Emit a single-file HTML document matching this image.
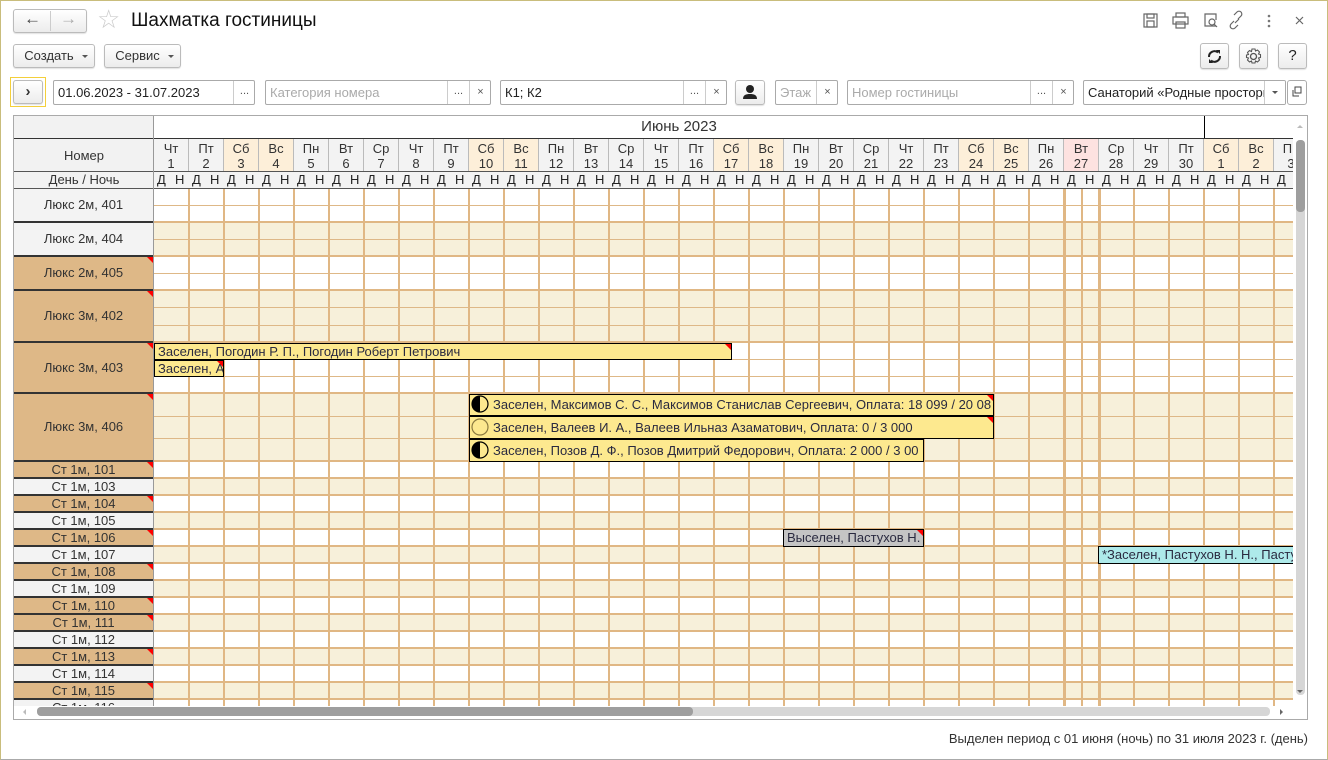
<!DOCTYPE html>
<html><head><meta charset="utf-8">
<style>
*{box-sizing:border-box;margin:0;padding:0}
body{width:1328px;height:760px;overflow:hidden;background:#fff;font-family:"Liberation Sans",Arial,sans-serif;font-size:13px;color:#333;position:relative}
.a{position:absolute}
.frame{left:0;top:0;width:1328px;height:760px;border:1px solid #c9bd7c;border-bottom-color:#aaa}
.btn{position:absolute;border:1px solid #bbb;border-radius:3px;background:linear-gradient(#fff,#ececec);box-shadow:0 1px 1px rgba(0,0,0,.12);text-align:center;color:#333}
.inp{position:absolute;border:1px solid #aaa;border-radius:2px;background:#fff;height:25px;line-height:23px;padding-left:4px;white-space:nowrap;overflow:hidden}
.sub{position:absolute;top:0;height:23px;border-left:1px solid #ccc;text-align:center;width:22px;color:#555;font-size:11px}
.ph{color:#aaa}
.hd{position:absolute;text-align:center;line-height:15px;border-right:1px solid #bbb}
.bk{position:absolute;border:1px solid #000;white-space:nowrap;overflow:hidden;padding-left:3px;color:#2a2a40}
.rc{position:absolute;right:0;top:0;width:0;height:0;border-top:6px solid #f00;border-left:6px solid transparent}
</style></head><body>
<div class="a frame"></div>
<div class="btn" style="left:13px;top:9px;width:74px;height:24px"></div>
<div class="a" style="left:50px;top:11px;width:1px;height:20px;background:#ccc"></div>
<div class="a" style="left:24px;top:9px;font-size:17px;font-weight:bold;color:#444">&#8592;</div>
<div class="a" style="left:60px;top:9px;font-size:17px;font-weight:bold;color:#aaa">&#8594;</div>
<div class="a" style="left:97px;top:4px;font-size:26px;color:#ccc">&#9734;</div>
<div class="a" style="left:131px;top:10px;font-size:19px;color:#111">Шахматка гостиницы</div>
<svg class="a" style="left:1140px;top:10px" width="180" height="22" viewBox="0 0 180 22">
<g fill="none" stroke="#666" stroke-width="1.2">
<rect x="4" y="4" width="13" height="13"/><rect x="7" y="4" width="7" height="4"/><rect x="7" y="11" width="7" height="6"/>
<rect x="36" y="3" width="9" height="4"/><rect x="33" y="7" width="15" height="7"/><rect x="36" y="12" width="9" height="6"/>
<path d="M76 16H65V4h11v6"/><circle cx="72" cy="12" r="3"/><path d="M74 14l3 3"/>
<path d="M94 11l-3 3a2.5 2.5 0 0 0 4 4l3-3M98 9l3-3a2.5 2.5 0 0 0-4-4l-3 3M95 13l4-4"/>
</g>
<g fill="#777"><circle cx="129" cy="6" r="1.3"/><circle cx="129" cy="11" r="1.3"/><circle cx="129" cy="16" r="1.3"/></g>
<path d="M156 7l7 7M163 7l-7 7" stroke="#666" stroke-width="1.2"/>
</svg>
<div class="btn" style="left:13px;top:44px;width:82px;height:24px;line-height:22px;padding-right:10px">Создать</div>
<div class="a" style="left:82px;top:55px;border-left:3px solid transparent;border-right:3px solid transparent;border-top:3px solid #555"></div>
<div class="btn" style="left:104px;top:44px;width:77px;height:24px;line-height:22px;padding-right:10px">Сервис</div>
<div class="a" style="left:168px;top:55px;border-left:3px solid transparent;border-right:3px solid transparent;border-top:3px solid #555"></div>
<div class="btn" style="left:1200px;top:43px;width:29px;height:26px"></div>
<svg class="a" style="left:1205px;top:47px" width="19" height="19" viewBox="0 0 19 19"><path d="M4 10a5.5 5.5 0 0 1 9-4.5M15 9a5.5 5.5 0 0 1-9 4.5" fill="none" stroke="#222" stroke-width="2"/><path d="M11 3l4 0 0 4z M8 16l-4 0 0-4z" fill="#222"/></svg>
<div class="btn" style="left:1239px;top:43px;width:29px;height:26px"></div>
<svg class="a" style="left:1244px;top:47px" width="19" height="19" viewBox="0 0 19 19"><circle cx="9.5" cy="9.5" r="3" fill="none" stroke="#555" stroke-width="1.3"/><path d="M8 2h3l.5 2 2-1 2 2-1 2 2 .5v3l-2 .5 1 2-2 2-2-1-.5 2H8l-.5-2-2 1-2-2 1-2-2-.5V8l2-.5-1-2 2-2 2 1z" fill="none" stroke="#555" stroke-width="1.1"/></svg>
<div class="btn" style="left:1278px;top:43px;width:29px;height:26px;line-height:24px;font-size:15px;color:#222">?</div>
<div class="a" style="left:10px;top:77px;width:36px;height:30px;border:1px solid #f3cf3b"></div>
<div class="btn" style="left:13px;top:80px;width:30px;height:24px;line-height:21px;font-size:15px;font-weight:bold;color:#333">&#8250;</div>
<div class="inp" style="left:53px;top:80px;width:202px;color:#222">01.06.2023 - 31.07.2023<span class="sub" style="left:179px;line-height:20px">...</span></div>
<div class="inp ph" style="left:265px;top:80px;width:226px">Категория номера<span class="sub" style="left:181px;line-height:20px">...</span><span class="sub" style="left:203px">×</span></div>
<div class="inp" style="left:500px;top:80px;width:227px;color:#222">К1; К2<span class="sub" style="left:182px;line-height:20px">...</span><span class="sub" style="left:204px">×</span></div>
<div class="btn" style="left:735px;top:80px;width:30px;height:25px"></div>
<svg class="a" style="left:741px;top:83px" width="18" height="18" viewBox="0 0 18 18"><circle cx="9" cy="6" r="4" fill="#222"/><path d="M2 16c0-4 3-5 7-5s7 1 7 5z" fill="#222"/></svg>
<div class="inp ph" style="left:775px;top:80px;width:63px">Этаж<span class="sub" style="left:40px">×</span></div>
<div class="inp ph" style="left:847px;top:80px;width:227px">Номер гостиницы<span class="sub" style="left:182px;line-height:20px">...</span><span class="sub" style="left:204px">×</span></div>
<div class="inp" style="left:1083px;top:80px;width:203px;color:#222">Санаторий «Родные просторы<span class="sub" style="left:180px;width:22px;background:#fff"></span></div>
<div class="a" style="left:1272px;top:91px;border-left:3px solid transparent;border-right:3px solid transparent;border-top:3px solid #555"></div>
<div class="btn" style="left:1287px;top:80px;width:20px;height:25px;box-shadow:none;background:#fff;border-color:#aaa"></div>
<svg class="a" style="left:1291px;top:86px" width="12" height="12"><rect x="4" y="1" width="6" height="6" fill="none" stroke="#444"/><path d="M2 4v6h6" fill="none" stroke="#444"/></svg>
<div class="a" style="left:13px;top:115px;width:1295px;height:605px;border:1px solid #aaa"></div>
<div class="a" style="left:14px;top:116px;width:140px;height:73px;background:#f2f2f2"></div>
<div class="a" id="g" style="left:14px;top:116px;width:1279px;height:590px;overflow:hidden"></div>
<div class="a" style="left:1295px;top:116px;width:12px;height:590px;background:#fff"></div>
<div class="a" style="left:1296px;top:140px;width:9px;height:555px;background:#d6d6d6;border-radius:4px"></div>
<div class="a" style="left:1296px;top:140px;width:9px;height:72px;background:#9e9e9e;border-radius:4px"></div>
<div class="a" style="left:1297px;top:125px;border-left:3px solid transparent;border-right:3px solid transparent;border-bottom:3px solid #bbb"></div>
<div class="a" style="left:1297px;top:690px;border-left:3px solid transparent;border-right:3px solid transparent;border-top:3px solid #666"></div>
<div class="a" style="left:14px;top:706px;width:1293px;height:13px;background:#fff"></div>
<div class="a" style="left:37px;top:707px;width:1233px;height:9px;background:#d6d6d6;border-radius:4px"></div>
<div class="a" style="left:37px;top:707px;width:656px;height:9px;background:#9e9e9e;border-radius:4px"></div>
<div class="a" style="left:23px;top:709px;border-top:3px solid transparent;border-bottom:3px solid transparent;border-right:3px solid #bbb"></div>
<div class="a" style="left:1280px;top:709px;border-top:3px solid transparent;border-bottom:3px solid transparent;border-left:3px solid #666"></div>
<div class="a" style="right:20px;top:731px;font-size:13px;color:#333">Выделен период с 01 июня (ночь) по 31 июля 2023 г. (день)</div>
<script>
var g=document.getElementById('g'),h='';
var X0=140,W=35,TAN='#e0b784',LT='#deb887';
function d(s){h+=s}
d('<div class="a" style="left:'+X0+'px;top:0;width:1050px;height:22px;text-align:center;line-height:22px;font-size:15px;color:#333">Июнь 2023</div>');
d('<div class="a" style="left:'+(X0+1050)+'px;top:0;width:1px;height:23px;background:#000"></div>');
d('<div class="a" style="left:0;top:22px;width:1279px;height:1px;background:#333"></div>');
var dn=['Пн','Вт','Ср','Чт','Пт','Сб','Вс'];
for(var i=0;i<33;i++){
 var day=i<30?i+1:i-29, wd=(3+i)%7, x=X0+i*W;
 var bg=(wd>=5)?'#fdefd9':(i==26?'#fde2e0':'#f3f3f3');
 d('<div class="hd" style="left:'+x+'px;top:23px;width:'+W+'px;height:33px;background:'+bg+';padding-top:2px">'+dn[wd]+'<br>'+day+'</div>');
 d('<div class="a" style="left:'+x+'px;top:56px;width:'+W+'px;height:16px;background:#f3f3f3;line-height:16px;color:#222"><span style="position:absolute;left:3px">Д</span><span style="position:absolute;left:21px">Н</span></div>');
}
d('<div class="a" style="left:0;top:23px;width:140px;height:33px;line-height:33px;text-align:center;background:#f2f2f2">Номер</div>');
d('<div class="a" style="left:0;top:56px;width:140px;height:16px;line-height:16px;text-align:center;background:#f2f2f2">День / Ночь</div>');
d('<div class="a" style="left:0;top:55px;width:1279px;height:1px;background:#555"></div>');
d('<div class="a" style="left:0;top:72px;width:1279px;height:1px;background:#555"></div>');
var rows=[['Люкс 2м, 401',34,2,0],['Люкс 2м, 404',34,2,0],['Люкс 2м, 405',34,2,1],['Люкс 3м, 402',52,3,1],['Люкс 3м, 403',51,3,1],['Люкс 3м, 406',68,3,1]];
var st=[101,103,104,105,106,107,108,109,110,111,112,113,114,115,116];
var stt=[1,0,1,0,1,0,1,0,1,1,0,1,0,1,0];
for(var k=0;k<st.length;k++)rows.push(['Ст 1м, '+st[k],17,1,stt[k]]);
var y=73;
for(var r=0;r<rows.length;r++){
 var R=rows[r],bg=r%2?'#f7f0da':'#fff',sh=R[1]/R[2];
 d('<div class="a" style="left:140px;top:'+y+'px;width:1139px;height:'+R[1]+'px;background:'+bg+'"></div>');
 for(var s=1;s<R[2];s++)d('<div class="a" style="left:140px;top:'+Math.round(y+s*sh-1)+'px;width:1139px;height:1px;background:'+LT+'"></div>');
 d('<div class="a" style="left:140px;top:'+(y+R[1]-2)+'px;width:1139px;height:3px;background:'+TAN+'"></div>');
 var lb=R[3]?'#deb887':'#f3f3f3';
 d('<div class="a" style="left:0;top:'+y+'px;width:139px;height:'+R[1]+'px;background:'+lb+';text-align:center;line-height:'+(R[1]-2)+'px;color:#333">'+R[0]+(R[3]?'<div class="rc"></div>':'')+'</div>');
 d('<div class="a" style="left:0;top:'+(y+R[1]-2)+'px;width:139px;height:3px;background:#333"></div>');
 y+=R[1];
}
for(var i=1;i<33;i++){var x=X0+i*W-1;d('<div class="a" style="left:'+x+'px;top:73px;width:2px;height:520px;background:'+TAN+'"></div>');}
d('<div class="a" style="left:'+(X0+26*W-1)+'px;top:73px;width:3px;height:520px;background:'+TAN+'"></div>');
d('<div class="a" style="left:'+(X0+26*W+17)+'px;top:73px;width:2px;height:520px;background:'+TAN+'"></div>');
d('<div class="a" style="left:'+(X0+27*W-1)+'px;top:73px;width:3px;height:520px;background:'+TAN+'"></div>');
d('<div class="a" style="left:139px;top:0;width:1px;height:590px;background:#999"></div>');
function bk(x1,x2,y1,hh,bg,txt,rc,ic){
 var icon='';
 if(ic==1)icon='<svg style="vertical-align:-4px;margin-right:4px;margin-left:-2px" width="18" height="18"><circle cx="9" cy="9" r="8" fill="#fde98f" stroke="#000" stroke-width="1.2"/><path d="M9 1a8 8 0 0 0 0 16z" fill="#000"/></svg>';
 if(ic==2)icon='<svg style="vertical-align:-4px;margin-right:4px;margin-left:-2px" width="18" height="18"><circle cx="9" cy="9" r="8" fill="#fde98f" stroke="#8a7a40" stroke-width="1.2"/></svg>';
 d('<div class="bk" style="left:'+(x1-14)+'px;top:'+(y1-116)+'px;width:'+(x2-x1)+'px;height:'+hh+'px;background:'+bg+';line-height:'+(hh-2)+'px">'+icon+txt+(rc?'<div class="rc"></div>':'')+'</div>');
}
bk(154,732,343,17,'#fde98f','Заселен, Погодин Р. П., Погодин Роберт Петрович',1);
bk(154,224,360,17,'#fde98f','Заселен, А',1);
bk(469,994,394,22,'#fde98f','Заселен, Максимов С. С., Максимов Станислав Сергеевич, Оплата: 18 099 / 20 08',1,1);
bk(469,994,416,23,'#fde98f','Заселен, Валеев И. А., Валеев Ильназ Азаматович, Оплата: 0 / 3 000',1,2);
bk(469,924,439,23,'#fde98f','Заселен, Позов Д. Ф., Позов Дмитрий Федорович, Оплата: 2 000 / 3 00',0,1);
bk(783,924,529,18,'#c4c4c4','Выселен, Пастухов Н.',1);
bk(1098,1300,546,18,'#aeeaea','*Заселен, Пастухов Н. Н., Пастухов Николай',0);
g.innerHTML=h;
</script>
</body></html>
